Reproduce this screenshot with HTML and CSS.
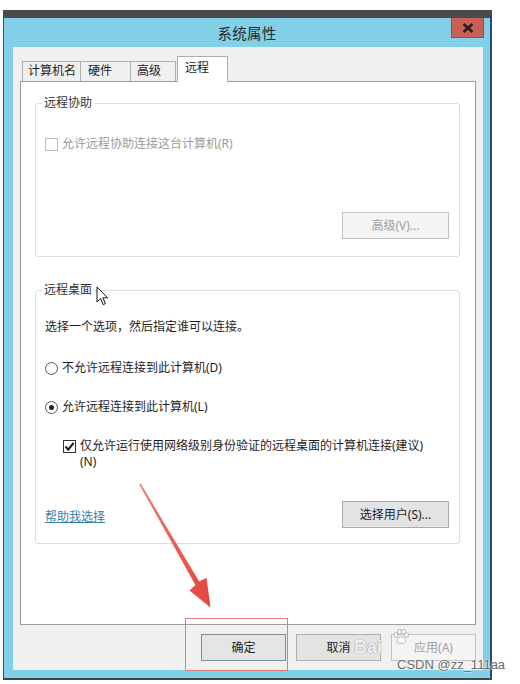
FILE: index.html
```html
<!DOCTYPE html>
<html lang="zh-CN">
<head>
    <meta charset="UTF-8">
    <meta name="viewport" content="width=device-width, initial-scale=1.0">
    <title>系统属性</title>
    <link rel="stylesheet" href="styles.css">
</head>
<body>
    <div class="desktop">
        <div class="window">
            <!-- 标题栏 -->
            <div class="titlebar">
                <span></span>
                <div class="title">系统属性</div>
                <button class="close" aria-label="关闭">
                    <svg width="12" height="10" viewBox="0 0 12 10"><path d="M1.5 1 L10.5 9 M10.5 1 L1.5 9" stroke="#2b1d1b" stroke-width="2.6" fill="none"/></svg>
                </button>
            </div>

            <div class="client">
                <div class="tabs">
                    <div class="tab">计算机名</div>
                    <div class="tab">硬件</div>
                    <div class="tab">高级</div>
                    <div class="tab active">远程</div>
                </div>

                <div class="panel">
                    <!-- 远程协助 -->
                    <fieldset class="group assist">
                        <legend>远程协助</legend>
                        <label class="check disabled"><span class="box"></span>允许远程协助连接这台计算机(R)</label>
                        <div class="group-actions">
                            <button class="btn wide" disabled>高级(V)...</button>
                        </div>
                    </fieldset>

                    <!-- 远程桌面 -->
                    <fieldset class="group rdp">
                        <legend>远程桌面</legend>
                        <p class="hint">选择一个选项，然后指定谁可以连接。</p>
                        <label class="radio first"><span class="dot"></span>不允许远程连接到此计算机(D)</label>
                        <label class="radio checked"><span class="dot"></span>允许远程连接到此计算机(L)</label>
                        <label class="check checked nla">
                            <span class="box"><svg width="11" height="11" viewBox="0 0 11 11"><path d="M1.5 5.5 L4.3 8.6 L9.6 1.8" stroke="#1b1b1b" stroke-width="2.1" fill="none"/></svg></span>
                            <span>仅允许运行使用网络级别身份验证的远程桌面的计算机连接(建议)<br>(N)</span>
                        </label>
                        <div class="group-actions split">
                            <a href="#" class="help">帮助我选择</a>
                            <button class="btn wide">选择用户(S)...</button>
                        </div>
                    </fieldset>
                </div>

                <div class="buttons">
                    <button class="btn default">确定</button>
                    <button class="btn">取消</button>
                    <button class="btn" disabled>应用(A)</button>
                </div>
            </div>
        </div>

        <!-- 鼠标指针 -->
        <svg class="cursor" width="13" height="20" viewBox="0 0 13 20">
            <path d="M1 1 L1 16 L4.6 12.6 L7.2 18.6 L9.4 17.6 L6.9 11.8 L11.6 11.8 Z" fill="#fff" stroke="#111" stroke-width="1" stroke-linejoin="miter"/>
        </svg>

        <!-- 红色箭头 -->
        <svg class="arrow" width="520" height="684" viewBox="0 0 520 684">
            <defs>
                <linearGradient id="shaft" x1="0" y1="0" x2="1" y2="1">
                    <stop offset="0" stop-color="#f07a72"/>
                    <stop offset="1" stop-color="#e4443d"/>
                </linearGradient>
            </defs>
            <polygon points="139.3,484.4 140.6,483.6 199.2,581.6 206.5,577.8 210.5,607.5 189.5,590.5 195.4,585" fill="url(#shaft)"/>
        </svg>

        <div class="highlight"></div>

        <!-- 水印 -->
        <div class="baidu">Bai</div>
        <svg class="paw" width="18" height="16" viewBox="0 0 18 16">
            <g fill="rgba(255,255,255,0.8)" stroke="#a8a8a8" stroke-width="0.8">
                <ellipse cx="4" cy="6" rx="2" ry="2.4"/>
                <ellipse cx="7.5" cy="2.8" rx="2" ry="2.4"/>
                <ellipse cx="11.5" cy="2.8" rx="2" ry="2.4"/>
                <ellipse cx="14.5" cy="6" rx="2" ry="2.4"/>
                <path d="M9.2 7.5 C6 7.5 4.5 11 5 13 C5.6 15 8 14.2 9.2 14.2 C10.4 14.2 12.8 15 13.4 13 C13.9 11 12.4 7.5 9.2 7.5 Z"/>
            </g>
        </svg>
        <div class="csdn">CSDN @zz_111aa</div>
    </div>
</body>
</html>
```

FILE: styles.css
```css
body {
    margin: 0;
    background: #fff;
    font-family: "Noto Sans", "Noto Sans CJK SC", sans-serif;
    font-size: 12px;
    line-height: 16px;
    color: #1e1e1e;
}
.desktop {
    position: relative;
    width: 520px;
    height: 684px;
    padding: 10px 0 0 3px;
    box-sizing: border-box;
    overflow: hidden;
}

/* 窗口外框 */
.window {
    width: 489px;
    box-sizing: border-box;
    border-top: 8px solid #4a4a4a;
    border-left: 1px solid #3e5058;
    border-right: 2px solid #2b4680;
    border-bottom: 2px solid #3a4650;
    background: #82cfe8;
    padding-bottom: 8px;
}
.titlebar {
    height: 29px;
    display: grid;
    grid-template-columns: 1fr auto 1fr;
    align-items: center;
}
.title {
    font-size: 14.5px;
    color: #2a2a2a;
    letter-spacing: 0.3px;
}
.close {
    justify-self: end;
    align-self: start;
    margin-right: 6px;
    width: 33px;
    height: 20px;
    padding: 0;
    border: 1px solid #9a4a44;
    border-top: none;
    background: #c95f55;
    display: flex;
    align-items: center;
    justify-content: center;
}

.client {
    margin: 0 7px 0 9px;
    background: #f0f0f0;
    padding: 10px 7px 9px 7px;
}

/* 选项卡 */
.tabs {
    height: 24px;
    display: flex;
    align-items: flex-end;
    padding-left: 2px;
}
.tab {
    height: 20px;
    box-sizing: border-box;
    border: 1px solid #acacac;
    border-bottom: none;
    background: #f0f0f0;
    padding: 1px 0 0 5px;
    margin-right: -1px;
    color: #222;
}
.tab:nth-child(1) { width: 59px; }
.tab:nth-child(2) { width: 51px; padding-left: 7px; }
.tab:nth-child(3) { width: 46px; padding-left: 6px; }
.tab.active {
    width: 51px;
    height: 26px;
    margin: 0 0 -1px 2px;
    padding: 3px 0 0 7px;
    background: #fff;
    position: relative;
    z-index: 1;
}

.panel {
    height: 544px;
    box-sizing: border-box;
    border: 1px solid #9c9c9c;
    background: #fff;
    padding: 13px 15px 0 14px;
}

/* 分组框 */
.group {
    margin: 0;
    border: 1px solid #dcdcdc;
    border-radius: 3px;
    padding: 0 10px 17px 9px;
    min-width: 0;
}
.group legend {
    padding: 0 2px;
    margin-left: -3px;
    color: #333;
}
.group.rdp {
    margin-top: 25px;
    padding-bottom: 15px;
}

.check, .radio {
    display: flex;
    align-items: flex-start;
}
.box {
    width: 11px;
    height: 11px;
    border: 1px solid #333;
    background: #fff;
    margin: 2px 4px 0 0;
    flex: none;
    display: flex;
    align-items: center;
    justify-content: center;
}
.check.disabled {
    margin-top: 25px;
    color: #9a9a9a;
}
.check.disabled .box {
    border-color: #bcbcbc;
}
.check.nla {
    margin: 23px 0 0 18px;
}

.hint {
    margin: 21px 0 0;
}
.radio {
    margin-top: 23px;
}
.radio.first {
    margin-top: 25px;
}
.dot {
    width: 11px;
    height: 11px;
    border: 1px solid #555;
    border-radius: 50%;
    margin: 2px 4px 0 0;
    flex: none;
    position: relative;
}
.radio.checked .dot::after {
    content: "";
    position: absolute;
    left: 3px;
    top: 3px;
    width: 5px;
    height: 5px;
    border-radius: 50%;
    background: #222;
}

.group-actions {
    display: flex;
    justify-content: flex-end;
    align-items: center;
    margin-top: 60px;
}
.group-actions.split {
    justify-content: space-between;
    margin-top: 31px;
}
.help {
    color: #2f7fae;
    text-decoration: underline;
    margin-top: 4px;
}

/* 按钮 */
.btn {
    font: inherit;
    color: #1e1e1e;
    width: 85px;
    height: 27px;
    padding: 0;
    border: 1px solid #adadad;
    background: #e3e3e3;
}
.btn.wide {
    width: 107px;
}
.btn:disabled {
    color: #a0a0a0;
    border-color: #c2c2c2;
    background: #f4f4f4;
}
.btn.default {
    border-color: #7f8c98;
    background: #e5e5e5;
}
.buttons {
    display: flex;
    justify-content: flex-end;
    gap: 10px;
    margin-top: 9px;
}

/* 覆盖层 */
.cursor {
    position: absolute;
    left: 96px;
    top: 286px;
}
.arrow {
    position: absolute;
    left: 0;
    top: 0;
    pointer-events: none;
}
.highlight {
    position: absolute;
    left: 185px;
    top: 618px;
    width: 101px;
    height: 51px;
    border: 1px solid #e27a78;
}
.baidu {
    position: absolute;
    left: 354px;
    top: 636px;
    font-family: "Liberation Sans", sans-serif;
    font-size: 18px;
    line-height: 22px;
    font-weight: bold;
    color: rgba(255, 255, 255, 0.85);
    text-shadow: 0 0 1px #9a9a9a, 0 0 1px #9a9a9a;
}
.paw {
    position: absolute;
    left: 392px;
    top: 629px;
}
.csdn {
    position: absolute;
    left: 397px;
    top: 657px;
    font-family: "Liberation Sans", sans-serif;
    font-size: 13px;
    color: #6c6c6c;
    text-shadow: 0 0 2px #fff, 0 0 2px #fff;
}
```
